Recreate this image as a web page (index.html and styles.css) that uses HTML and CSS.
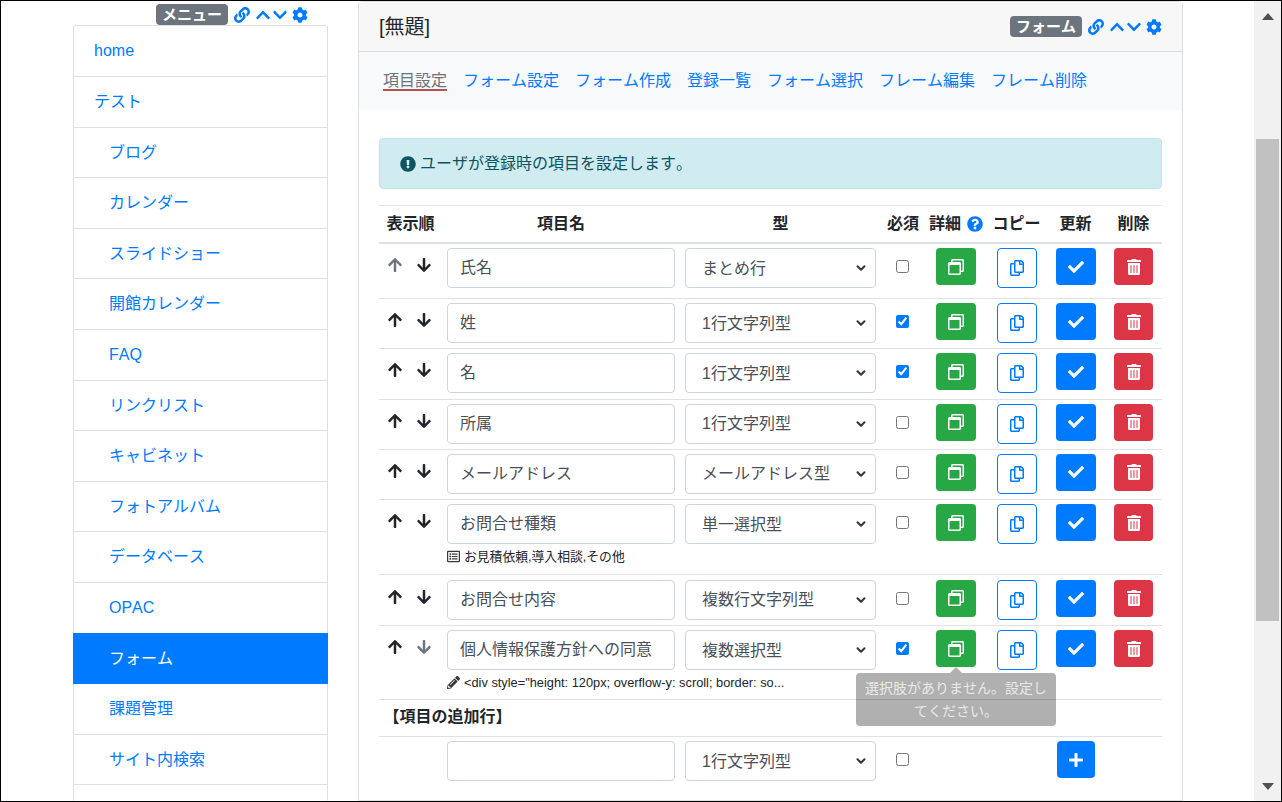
FILE: index.html
```html
<!DOCTYPE html>
<html lang="ja">

<head>
  <meta charset="UTF-8" />
  <title>フォーム</title>
  <link rel="stylesheet" href="styles.css">
</head>

<body>
  <svg class="defs" xmlns="http://www.w3.org/2000/svg">
    <symbol id="i-link" viewBox="0 0 512 512"><path d="M326.612 185.391c59.747 59.809 58.927 155.698.36 214.59-.11.12-.24.25-.36.37l-67.2 67.2c-59.27 59.27-155.699 59.262-214.96 0-59.27-59.26-59.27-155.7 0-214.96l37.106-37.106c9.84-9.84 26.786-3.3 27.294 10.606.648 17.722 3.826 35.527 9.69 52.721 1.986 5.822.567 12.262-3.783 16.612l-13.087 13.087c-28.026 28.026-28.905 73.66-1.155 101.96 28.024 28.579 74.086 28.749 102.325.51l67.2-67.19c28.191-28.191 28.073-73.757 0-101.83-3.701-3.694-7.429-6.564-10.341-8.569a16.037 16.037 0 0 1-6.947-12.606c-.396-10.567 3.348-21.456 11.698-29.806l21.054-21.055c5.521-5.521 14.182-6.199 20.584-1.731a152.482 152.482 0 0 1 20.522 17.197zM467.547 44.449c-59.261-59.262-155.69-59.27-214.96 0l-67.2 67.2c-.12.12-.25.25-.36.37-58.566 58.892-59.387 154.781.36 214.59a152.454 152.454 0 0 0 20.521 17.196c6.402 4.468 15.064 3.789 20.584-1.731l21.054-21.055c8.35-8.35 12.094-19.239 11.698-29.806a16.037 16.037 0 0 0-6.947-12.606c-2.912-2.005-6.64-4.875-10.341-8.569-28.073-28.073-28.191-73.639 0-101.83l67.2-67.19c28.239-28.239 74.3-28.069 102.325.51 27.75 28.3 26.872 73.934-1.155 101.96l-13.087 13.087c-4.35 4.35-5.769 10.79-3.783 16.612 5.864 17.194 9.042 34.999 9.69 52.721.509 13.906 17.454 20.446 27.294 10.606l37.106-37.106c59.271-59.259 59.271-155.699.001-214.959z"/></symbol>
    <symbol id="i-up" viewBox="0 0 448 512"><path d="M240.971 130.524l194.343 194.343c9.373 9.373 9.373 24.569 0 33.941l-22.667 22.667c-9.357 9.357-24.522 9.375-33.901.04L224 227.495 69.255 381.516c-9.379 9.335-24.544 9.317-33.901-.04l-22.667-22.667c-9.373-9.373-9.373-24.569 0-33.941L207.03 130.525c9.372-9.373 24.568-9.373 33.941-.001z"/></symbol>
    <symbol id="i-down" viewBox="0 0 448 512"><path d="M207.029 381.476L12.686 187.132c-9.373-9.373-9.373-24.569 0-33.941l22.667-22.667c9.357-9.357 24.522-9.375 33.901-.04L224 284.505l154.745-154.021c9.379-9.335 24.544-9.317 33.901.04l22.667 22.667c9.373 9.373 9.373 24.569 0 33.941L240.971 381.476c-9.373 9.372-24.569 9.372-33.942 0z"/></symbol>
    <symbol id="i-cog" viewBox="0 0 512 512"><path d="M487.4 315.7l-42.6-24.6c4.3-23.2 4.3-47 0-70.2l42.6-24.6c4.9-2.8 7.1-8.6 5.5-14-11.1-35.6-30-67.8-54.7-94.6-3.8-4.1-10-5.1-14.8-2.3L380.8 110c-17.9-15.4-38.5-27.3-60.8-35.1V25.8c0-5.6-3.9-10.5-9.4-11.7-36.7-8.2-74.3-7.8-109.2 0-5.5 1.2-9.4 6.1-9.4 11.7V75c-22.2 7.9-42.8 19.8-60.8 35.1L88.7 85.5c-4.9-2.8-11-1.9-14.8 2.3-24.7 26.7-43.6 58.9-54.7 94.6-1.7 5.4.6 11.2 5.5 14L67.3 221c-4.3 23.2-4.3 47 0 70.2l-42.6 24.6c-4.9 2.8-7.1 8.6-5.5 14 11.1 35.6 30 67.8 54.7 94.6 3.8 4.1 10 5.1 14.8 2.3l42.6-24.6c17.9 15.4 38.5 27.3 60.8 35.1v49.2c0 5.6 3.9 10.5 9.4 11.7 36.7 8.2 74.3 7.8 109.2 0 5.5-1.2 9.4-6.1 9.4-11.7v-49.2c22.2-7.9 42.8-19.8 60.8-35.1l42.6 24.6c4.9 2.8 11 1.9 14.8-2.3 24.7-26.7 43.6-58.9 54.7-94.6 1.5-5.5-.7-11.3-5.6-14.1zM256 336c-44.1 0-80-35.9-80-80s35.9-80 80-80 80 35.9 80 80-35.9 80-80 80z"/></symbol>
    <symbol id="i-arrow-up" viewBox="0 0 448 512"><path d="M34.9 289.5l-22.2-22.2c-9.4-9.4-9.4-24.6 0-33.9L207 39c9.4-9.4 24.6-9.4 33.9 0l194.3 194.3c9.4 9.4 9.4 24.6 0 33.9L413 289.4c-9.5 9.5-25 9.3-34.3-.4L264 168.6V456c0 13.3-10.7 24-24 24h-32c-13.3 0-24-10.7-24-24V168.6L69.2 289.1c-9.3 9.8-24.8 10-34.3.4z"/></symbol>
    <symbol id="i-arrow-down" viewBox="0 0 448 512"><path d="M413.1 222.5l22.2 22.2c9.4 9.4 9.4 24.6 0 33.9L241 473c-9.4 9.4-24.6 9.4-33.9 0L12.7 278.6c-9.4-9.4-9.4-24.6 0-33.9l22.2-22.2c9.5-9.5 25-9.3 34.3.4L184 343.4V56c0-13.3 10.7-24 24-24h32c13.3 0 24 10.7 24 24v287.4l114.8-120.5c9.3-9.8 24.8-10 34.3-.4z"/></symbol>
    <symbol id="i-alert" viewBox="0 0 512 512"><path d="M504 256c0 136.997-111.043 248-248 248S8 392.997 8 256C8 119.083 119.043 8 256 8s248 111.083 248 248zm-248 50c-25.405 0-46 20.595-46 46s20.595 46 46 46 46-20.595 46-46-20.595-46-46-46zm-43.673-165.346l7.418 136c.347 6.364 5.609 11.346 11.982 11.346h48.546c6.373 0 11.635-4.982 11.982-11.346l7.418-136c.375-6.874-5.098-12.654-11.982-12.654h-63.383c-6.884 0-12.356 5.78-11.981 12.654z"/></symbol>
    <symbol id="i-help" viewBox="0 0 512 512"><path d="M504 256c0 136.997-111.043 248-248 248S8 392.997 8 256C8 119.083 119.043 8 256 8s248 111.083 248 248zM262.655 90c-54.497 0-89.255 22.957-116.549 63.758-3.536 5.286-2.353 12.415 2.715 16.258l34.699 26.31c5.205 3.947 12.621 3.008 16.665-2.122 17.864-22.658 30.113-35.797 57.303-35.797 20.429 0 45.698 13.148 45.698 32.958 0 14.976-12.363 22.667-32.534 33.976C247.128 238.528 216 254.941 216 296v4c0 6.627 5.373 12 12 12h56c6.627 0 12-5.373 12-12v-1.333c0-28.462 83.186-29.647 83.186-106.667 0-58.002-60.165-102-116.531-102zM256 338c-25.365 0-46 20.635-46 46 0 25.364 20.635 46 46 46s46-20.636 46-46c0-25.365-20.635-46-46-46z"/></symbol>
    <symbol id="i-window" viewBox="0 0 512 512"><path d="M464 0H144c-26.5 0-48 21.5-48 48v48H48c-26.5 0-48 21.5-48 48v320c0 26.5 21.5 48 48 48h320c26.5 0 48-21.5 48-48v-48h48c26.5 0 48-21.5 48-48V48c0-26.5-21.5-48-48-48zM362 464H54c-3.3 0-6-2.7-6-6V192h320v266c0 3.3-2.7 6-6 6zm96-96h-42V144c0-26.5-21.5-48-48-48H144V54c0-3.3 2.7-6 6-6h308c3.3 0 6 2.7 6 6v308c0 3.3-2.7 6-6 6z"/></symbol>
    <symbol id="i-copy" viewBox="0 0 448 512"><path d="M433.941 65.941l-51.882-51.882A48 48 0 0 0 348.118 0H176c-26.51 0-48 21.49-48 48v48H48c-26.51 0-48 21.49-48 48v320c0 26.51 21.49 48 48 48h224c26.51 0 48-21.49 48-48v-48h80c26.51 0 48-21.49 48-48V99.882a48 48 0 0 0-14.059-33.941zM266 464H54a6 6 0 0 1-6-6V150a6 6 0 0 1 6-6h74v224c0 26.51 21.49 48 48 48h96v42a6 6 0 0 1-6 6zm128-96H182a6 6 0 0 1-6-6V54a6 6 0 0 1 6-6h106v88c0 13.255 10.745 24 24 24h88v202a6 6 0 0 1-6 6zm6-256h-64V48h9.632c1.591 0 3.117.632 4.243 1.757l48.368 48.368a6 6 0 0 1 1.757 4.243V112z"/></symbol>
    <symbol id="i-check" viewBox="0 0 512 512"><path d="M173.898 439.404l-166.4-166.4c-9.997-9.997-9.997-26.206 0-36.204l36.203-36.204c9.997-9.998 26.207-9.998 36.204 0L192 312.69 432.095 72.596c9.997-9.997 26.207-9.997 36.204 0l36.203 36.204c9.997 9.997 9.997 26.206 0 36.204l-294.4 294.401c-9.998 9.997-26.207 9.997-36.204-.001z"/></symbol>
    <symbol id="i-trash" viewBox="0 0 448 512"><path d="M32 464a48 48 0 0 0 48 48h288a48 48 0 0 0 48-48V128H32zm272-256a16 16 0 0 1 32 0v224a16 16 0 0 1-32 0zm-96 0a16 16 0 0 1 32 0v224a16 16 0 0 1-32 0zm-96 0a16 16 0 0 1 32 0v224a16 16 0 0 1-32 0zM432 32H312l-9.4-18.7A24 24 0 0 0 281.1 0H166.8a23.72 23.72 0 0 0-21.4 13.3L136 32H16A16 16 0 0 0 0 48v32a16 16 0 0 0 16 16h416a16 16 0 0 0 16-16V48a16 16 0 0 0-16-16z"/></symbol>
    <symbol id="i-plus" viewBox="0 0 448 512"><path d="M416 208H272V64c0-17.67-14.33-32-32-32h-32c-17.67 0-32 14.33-32 32v144H32c-17.67 0-32 14.33-32 32v32c0 17.67 14.33 32 32 32h144v144c0 17.67 14.33 32 32 32h32c17.67 0 32-14.33 32-32V304h144c17.67 0 32-14.33 32-32v-32c0-17.67-14.33-32-32-32z"/></symbol>
    <symbol id="i-list" viewBox="0 0 512 512"><path d="M464 32H48C21.49 32 0 53.49 0 80v352c0 26.51 21.49 48 48 48h416c26.51 0 48-21.49 48-48V80c0-26.51-21.49-48-48-48zm-6 400H54a6 6 0 0 1-6-6V86a6 6 0 0 1 6-6h404a6 6 0 0 1 6 6v340a6 6 0 0 1-6 6zm-42-92v24c0 6.627-5.373 12-12 12H204c-6.627 0-12-5.373-12-12v-24c0-6.627 5.373-12 12-12h200c6.627 0 12 5.373 12 12zm0-96v24c0 6.627-5.373 12-12 12H204c-6.627 0-12-5.373-12-12v-24c0-6.627 5.373-12 12-12h200c6.627 0 12 5.373 12 12zm0-96v24c0 6.627-5.373 12-12 12H204c-6.627 0-12-5.373-12-12v-24c0-6.627 5.373-12 12-12h200c6.627 0 12 5.373 12 12zm-252 12c0 19.882-16.118 36-36 36s-36-16.118-36-36 16.118-36 36-36 36 16.118 36 36zm0 96c0 19.882-16.118 36-36 36s-36-16.118-36-36 16.118-36 36-36 36 16.118 36 36zm0 96c0 19.882-16.118 36-36 36s-36-16.118-36-36 16.118-36 36-36 36 16.118 36 36z"/></symbol>
    <symbol id="i-pencil" viewBox="0 0 512 512"><path d="M497.9 142.1l-46.1 46.1c-4.7 4.7-12.3 4.7-17 0l-111-111c-4.7-4.7-4.7-12.3 0-17l46.1-46.1c18.7-18.7 49.1-18.7 67.9 0l60.1 60.1c18.8 18.7 18.8 49.1 0 67.9zM284.2 99.8L21.6 362.4.4 483.9c-2.9 16.4 11.4 30.6 27.8 27.8l121.5-21.3 262.6-262.6c4.7-4.7 4.7-12.3 0-17l-111-111c-4.8-4.7-12.4-4.7-17.1 0zM124.1 339.9c-5.5-5.5-5.5-14.3 0-19.8l154-154c5.5-5.5 14.3-5.5 19.8 0s5.5 14.3 0 19.8l-154 154c-5.5 5.5-14.3 5.5-19.8 0zM88 424h48v36.3l-64.5 11.3-31.1-31.1L51.7 376H88v48z"/></symbol>
  </svg>

  <div class="window">
    <div class="page">

      <aside class="sidebar">
        <div class="tools side-tools">
          <span class="badge">メニュー</span>
          <svg class="ico w16 t-link"><use href="#i-link"/></svg>
          <svg class="ico w14 t-up"><use href="#i-up"/></svg>
          <svg class="ico w14 t-down"><use href="#i-down"/></svg>
          <svg class="ico w16"><use href="#i-cog"/></svg>
        </div>
        <nav class="menu">
          <a class="menu-item">home</a>
          <a class="menu-item">テスト</a>
          <a class="menu-item sub">ブログ</a>
          <a class="menu-item sub">カレンダー</a>
          <a class="menu-item sub">スライドショー</a>
          <a class="menu-item sub">開館カレンダー</a>
          <a class="menu-item sub">FAQ</a>
          <a class="menu-item sub">リンクリスト</a>
          <a class="menu-item sub">キャビネット</a>
          <a class="menu-item sub">フォトアルバム</a>
          <a class="menu-item sub">データベース</a>
          <a class="menu-item sub">OPAC</a>
          <a class="menu-item sub active">フォーム</a>
          <a class="menu-item sub">課題管理</a>
          <a class="menu-item sub">サイト内検索</a>
          <a class="menu-item sub">お知らせ</a>
        </nav>
      </aside>

      <main class="panel">
        <header class="panel-head">
          <span class="panel-title">[無題]</span>
          <div class="tools">
            <span class="badge">フォーム</span>
            <svg class="ico w16 t-link"><use href="#i-link"/></svg>
            <svg class="ico w14 t-up"><use href="#i-up"/></svg>
            <svg class="ico w14 t-down"><use href="#i-down"/></svg>
            <svg class="ico w16"><use href="#i-cog"/></svg>
          </div>
        </header>

        <nav class="tabs">
          <a class="tab current">項目設定</a>
          <a class="tab">フォーム設定</a>
          <a class="tab">フォーム作成</a>
          <a class="tab">登録一覧</a>
          <a class="tab">フォーム選択</a>
          <a class="tab">フレーム編集</a>
          <a class="tab">フレーム削除</a>
        </nav>

        <div class="panel-body">
          <div class="alert">
            <svg class="ico-alert"><use href="#i-alert"/></svg>
            <span>ユーザが登録時の項目を設定します。</span>
          </div>

          <div class="grid-head">
            <div>表示順</div>
            <div>項目名</div>
            <div>型</div>
            <div>必須</div>
            <div class="help">詳細<svg class="ico w16"><use href="#i-help"/></svg></div>
            <div>コピー</div>
            <div>更新</div>
            <div>削除</div>
          </div>

          <div class="row first">
            <div class="arrows"><svg class="arrow off"><use href="#i-arrow-up"/></svg><svg class="arrow"><use href="#i-arrow-down"/></svg></div>
            <input class="field name" value="氏名">
            <select class="field kind"><option>まとめ行</option></select>
            <input class="check" type="checkbox">
            <button class="btn green"><svg><use href="#i-window"/></svg></button>
            <button class="btn outline"><svg class="narrow"><use href="#i-copy"/></svg></button>
            <button class="btn blue"><svg><use href="#i-check"/></svg></button>
            <button class="btn red"><svg class="narrow"><use href="#i-trash"/></svg></button>
          </div>

          <div class="row">
            <div class="arrows"><svg class="arrow"><use href="#i-arrow-up"/></svg><svg class="arrow"><use href="#i-arrow-down"/></svg></div>
            <input class="field name" value="姓">
            <select class="field kind"><option>1行文字列型</option></select>
            <input class="check" type="checkbox" checked>
            <button class="btn green"><svg><use href="#i-window"/></svg></button>
            <button class="btn outline"><svg class="narrow"><use href="#i-copy"/></svg></button>
            <button class="btn blue"><svg><use href="#i-check"/></svg></button>
            <button class="btn red"><svg class="narrow"><use href="#i-trash"/></svg></button>
          </div>

          <div class="row">
            <div class="arrows"><svg class="arrow"><use href="#i-arrow-up"/></svg><svg class="arrow"><use href="#i-arrow-down"/></svg></div>
            <input class="field name" value="名">
            <select class="field kind"><option>1行文字列型</option></select>
            <input class="check" type="checkbox" checked>
            <button class="btn green"><svg><use href="#i-window"/></svg></button>
            <button class="btn outline"><svg class="narrow"><use href="#i-copy"/></svg></button>
            <button class="btn blue"><svg><use href="#i-check"/></svg></button>
            <button class="btn red"><svg class="narrow"><use href="#i-trash"/></svg></button>
          </div>

          <div class="row">
            <div class="arrows"><svg class="arrow"><use href="#i-arrow-up"/></svg><svg class="arrow"><use href="#i-arrow-down"/></svg></div>
            <input class="field name" value="所属">
            <select class="field kind"><option>1行文字列型</option></select>
            <input class="check" type="checkbox">
            <button class="btn green"><svg><use href="#i-window"/></svg></button>
            <button class="btn outline"><svg class="narrow"><use href="#i-copy"/></svg></button>
            <button class="btn blue"><svg><use href="#i-check"/></svg></button>
            <button class="btn red"><svg class="narrow"><use href="#i-trash"/></svg></button>
          </div>

          <div class="row">
            <div class="arrows"><svg class="arrow"><use href="#i-arrow-up"/></svg><svg class="arrow"><use href="#i-arrow-down"/></svg></div>
            <input class="field name" value="メールアドレス">
            <select class="field kind"><option>メールアドレス型</option></select>
            <input class="check" type="checkbox">
            <button class="btn green"><svg><use href="#i-window"/></svg></button>
            <button class="btn outline"><svg class="narrow"><use href="#i-copy"/></svg></button>
            <button class="btn blue"><svg><use href="#i-check"/></svg></button>
            <button class="btn red"><svg class="narrow"><use href="#i-trash"/></svg></button>
          </div>

          <div class="row">
            <div class="arrows"><svg class="arrow"><use href="#i-arrow-up"/></svg><svg class="arrow"><use href="#i-arrow-down"/></svg></div>
            <input class="field name" value="お問合せ種類">
            <select class="field kind"><option>単一選択型</option></select>
            <input class="check" type="checkbox">
            <button class="btn green"><svg><use href="#i-window"/></svg></button>
            <button class="btn outline"><svg class="narrow"><use href="#i-copy"/></svg></button>
            <button class="btn blue"><svg><use href="#i-check"/></svg></button>
            <button class="btn red"><svg class="narrow"><use href="#i-trash"/></svg></button>
            <div class="note"><svg class="note-ico"><use href="#i-list"/></svg>お見積依頼,導入相談,その他</div>
          </div>

          <div class="row after-note">
            <div class="arrows"><svg class="arrow"><use href="#i-arrow-up"/></svg><svg class="arrow"><use href="#i-arrow-down"/></svg></div>
            <input class="field name" value="お問合せ内容">
            <select class="field kind"><option>複数行文字列型</option></select>
            <input class="check" type="checkbox">
            <button class="btn green"><svg><use href="#i-window"/></svg></button>
            <button class="btn outline"><svg class="narrow"><use href="#i-copy"/></svg></button>
            <button class="btn blue"><svg><use href="#i-check"/></svg></button>
            <button class="btn red"><svg class="narrow"><use href="#i-trash"/></svg></button>
          </div>

          <div class="row">
            <div class="arrows"><svg class="arrow"><use href="#i-arrow-up"/></svg><svg class="arrow off"><use href="#i-arrow-down"/></svg></div>
            <input class="field name" value="個人情報保護方針への同意">
            <select class="field kind"><option>複数選択型</option></select>
            <input class="check" type="checkbox" checked>
            <div class="has-tip">
              <button class="btn green"><svg><use href="#i-window"/></svg></button>
              <div class="tip">選択肢がありません。設定してください。</div>
            </div>
            <button class="btn outline"><svg class="narrow"><use href="#i-copy"/></svg></button>
            <button class="btn blue"><svg><use href="#i-check"/></svg></button>
            <button class="btn red"><svg class="narrow"><use href="#i-trash"/></svg></button>
            <div class="note short"><svg class="note-ico"><use href="#i-pencil"/></svg>&lt;div style="height: 120px; overflow-y: scroll; border: so...</div>
          </div>

          <div class="add-title">【項目の追加行】</div>

          <div class="row last">
            <div class="arrows"></div>
            <input class="field name" value="">
            <select class="field kind"><option>1行文字列型</option></select>
            <input class="check" type="checkbox">
            <div></div>
            <div></div>
            <button class="btn blue plus"><svg class="narrow"><use href="#i-plus"/></svg></button>
          </div>
        </div>
      </main>
    </div>

    <div class="scrollbar">
      <div class="sb-btn"><span class="tri-up"></span></div>
      <div class="sb-thumb"></div>
      <div class="sb-btn bottom"><span class="tri-down"></span></div>
    </div>
  </div>
</body>

</html>
```

FILE: styles.css
```css
* {
  box-sizing: border-box;
}

html,
body {
  margin: 0;
  height: 100%;
  overflow: hidden;
}

body {
  background-color: white;
  color: #212529;
  font-family: "Liberation Sans", "Noto Sans CJK JP", sans-serif;
  font-size: 16px;
  font-kerning: none;
  line-height: 24px;
}

.defs {
  display: none;
}

.window {
  display: flex;
  height: 802px;
  border: 1px solid black;
  overflow: hidden;
}

.page {
  flex: 1;
  display: flex;
  gap: 30px;
  padding: 0 70px 0 72px;
  overflow: hidden;
}

/* icons and badge shared by both headers */
.ico {
  display: block;
  height: 16px;
  fill: #007bff;
}

.w16 {
  width: 16px;
}

.w14 {
  width: 14px;
}

.tools {
  display: flex;
  align-items: center;
  gap: 5px;
}

.t-link {
  margin-left: 1px;
}

.t-up {
  margin-left: 1px;
}

.t-down {
  margin-left: -2px;
}

.badge {
  display: block;
  width: 72px;
  height: 21px;
  border-radius: 4px;
  background-color: #6c757d;
  color: white;
  font-size: 15px;
  font-weight: bold;
  line-height: 21px;
  text-align: center;
}

/* left menu */
.sidebar {
  flex: none;
  width: 255px;
}

.side-tools {
  justify-content: flex-end;
  height: 24px;
  padding: 3px 20px 0 0;
}

.menu {
  padding-top: 0.4px;
  border-top: 1px solid #dfdfdf;
  border-radius: 4px 4px 0 0;
}

.menu-item {
  display: block;
  height: 50.6px;
  padding: 13px 20px;
  border: 1px solid #dfdfdf;
  border-top: 0;
  color: #007bff;
}

.menu-item.sub {
  padding-left: 35px;
}

.menu-item.active {
  height: 51.6px;
  margin-top: -1px;
  padding-top: 14px;
  background-color: #007bff;
  border-color: #007bff;
  color: white;
}

/* main panel */
.panel {
  flex: none;
  width: 825px;
  border: 1px solid #dfdfdf;
  border-radius: 4px 4px 0 0;
}

.panel-head {
  display: flex;
  justify-content: space-between;
  align-items: center;
  height: 50px;
  padding: 0 20px;
  background-color: #f7f7f7;
  border-bottom: 1px solid #dfdfdf;
}

.panel-title {
  font-size: 20px;
  color: #212529;
}

.tabs {
  display: flex;
  gap: 16px;
  height: 58px;
  padding: 18px 24px 0;
  background-color: #f8f9fa;
}

.tab {
  height: 21px;
  line-height: 22px;
  color: #007bff;
}

.tab.current {
  color: #6c757d;
  border-bottom: 2px solid #b85050;
}

.panel-body {
  padding: 28px 20px 0;
}

.alert {
  display: flex;
  align-items: center;
  gap: 4px;
  height: 51px;
  padding: 0 20px;
  margin-bottom: 16px;
  background-color: #d1ecf1;
  border: 1px solid #bee5eb;
  border-radius: 4px;
  color: #0c5460;
}

.ico-alert {
  width: 16px;
  height: 16px;
  fill: #0c5460;
}

/* item table */
.grid-head,
.row {
  display: grid;
  grid-template-columns: 63px 238px 201px 44px 62px 59px 59px 57px;
}

.grid-head {
  align-items: center;
  height: 39px;
  padding-bottom: 1px;
  border-top: 1px solid #dee2e6;
  border-bottom: 2px solid #dee2e6;
  font-weight: bold;
  text-align: center;
}

.help {
  display: flex;
  justify-content: center;
  align-items: center;
  gap: 6px;
}

.row {
  align-items: start;
  padding: 4px 0 5.25px;
  border-bottom: 1px solid #dee2e6;
}

.row.first {
  padding-bottom: 10px;
}

.row.after-note {
  padding-top: 4.75px;
}

.row.last {
  border-bottom: 0;
}

.arrows {
  display: flex;
  gap: 15px;
  padding: 9px 0 0 9px;
}

.arrow {
  width: 14px;
  height: 16px;
  fill: #212529;
}

.arrow.off {
  fill: #6c757d;
}

.field {
  display: block;
  height: 40px;
  padding: 0 12px;
  background-color: white;
  border: 1px solid #ced4da;
  border-radius: 4px;
  color: #495057;
  font: inherit;
  font-kerning: none;
}

.name {
  width: 228px;
  margin-left: 5px;
  padding-bottom: 4px;
}

.kind {
  width: 191px;
  margin-left: 5px;
  padding-left: 16px;
  padding-top: 1px;
  appearance: none;
  background-image: url("data:image/svg+xml,%3Csvg xmlns='http://www.w3.org/2000/svg' viewBox='0 0 16 16'%3E%3Cpath fill='none' stroke='%23343a40' stroke-linecap='round' stroke-linejoin='round' stroke-width='2.4' d='M4 6l4 4 4-4'/%3E%3C/svg%3E");
  background-repeat: no-repeat;
  background-position: right 6px center;
  background-size: 16px 14px;
}

.check {
  justify-self: center;
  width: 13px;
  height: 13px;
  margin: 12px 1px 0 0;
  accent-color: #007bff;
}

.btn {
  display: flex;
  justify-content: center;
  align-items: center;
  justify-self: center;
  width: 40px;
  height: 37px;
  padding: 0;
  border: 1px solid transparent;
  border-radius: 4px;
}

.btn svg {
  width: 16px;
  height: 16px;
  fill: white;
}

.btn svg.narrow {
  width: 14px;
}

.green {
  background-color: #28a745;
}

.blue {
  background-color: #007bff;
}

.red {
  width: 39px;
  background-color: #dc3545;
}

.outline {
  height: 40px;
  background-color: white;
  border-color: #007bff;
}

.outline svg {
  fill: #007bff;
}

.plus {
  width: 38px;
}

.note {
  grid-column: 2 / 4;
  display: flex;
  align-items: center;
  gap: 4px;
  height: 24.75px;
  padding: 1px 0 0 5px;
  font-size: 12.8px;
  line-height: 24px;
  white-space: nowrap;
}

.note.short {
  height: 24px;
}

.note-ico {
  width: 13px;
  height: 13px;
  fill: #343a40;
}

.add-title {
  height: 37px;
  padding-left: 4.5px;
  border-bottom: 1px solid #dee2e6;
  font-weight: bold;
  line-height: 34px;
}

/* tooltip over the details button */
.has-tip {
  position: relative;
  justify-self: center;
}

.tip {
  position: absolute;
  top: 43px;
  left: -80px;
  width: 200px;
  padding: 4px 8px;
  background-color: rgba(0, 0, 0, 0.31);
  border-radius: 4px;
  color: #e9e9e9;
  font-size: 14px;
  line-height: 22.5px;
  text-align: center;
}

.tip::before {
  content: "";
  position: absolute;
  top: -6px;
  left: 94px;
  border: solid transparent;
  border-width: 0 6px 6px;
  border-bottom-color: rgba(0, 0, 0, 0.31);
}

/* drawn scrollbar, the page itself does not scroll */
.scrollbar {
  flex: none;
  display: flex;
  flex-direction: column;
  align-items: center;
  width: 27px;
  background-color: #f1f1f1;
}

.sb-btn {
  display: flex;
  justify-content: center;
  align-items: center;
  height: 30px;
}

.sb-btn.bottom {
  margin-top: auto;
}

.tri-up {
  border: solid transparent;
  border-width: 0 6.5px 7px;
  border-bottom-color: #505050;
}

.tri-down {
  border: solid transparent;
  border-width: 7px 6.5px 0;
  border-top-color: #505050;
}

.sb-thumb {
  width: 23px;
  height: 482px;
  margin-top: 108px;
  background-color: #c1c1c1;
}
```
